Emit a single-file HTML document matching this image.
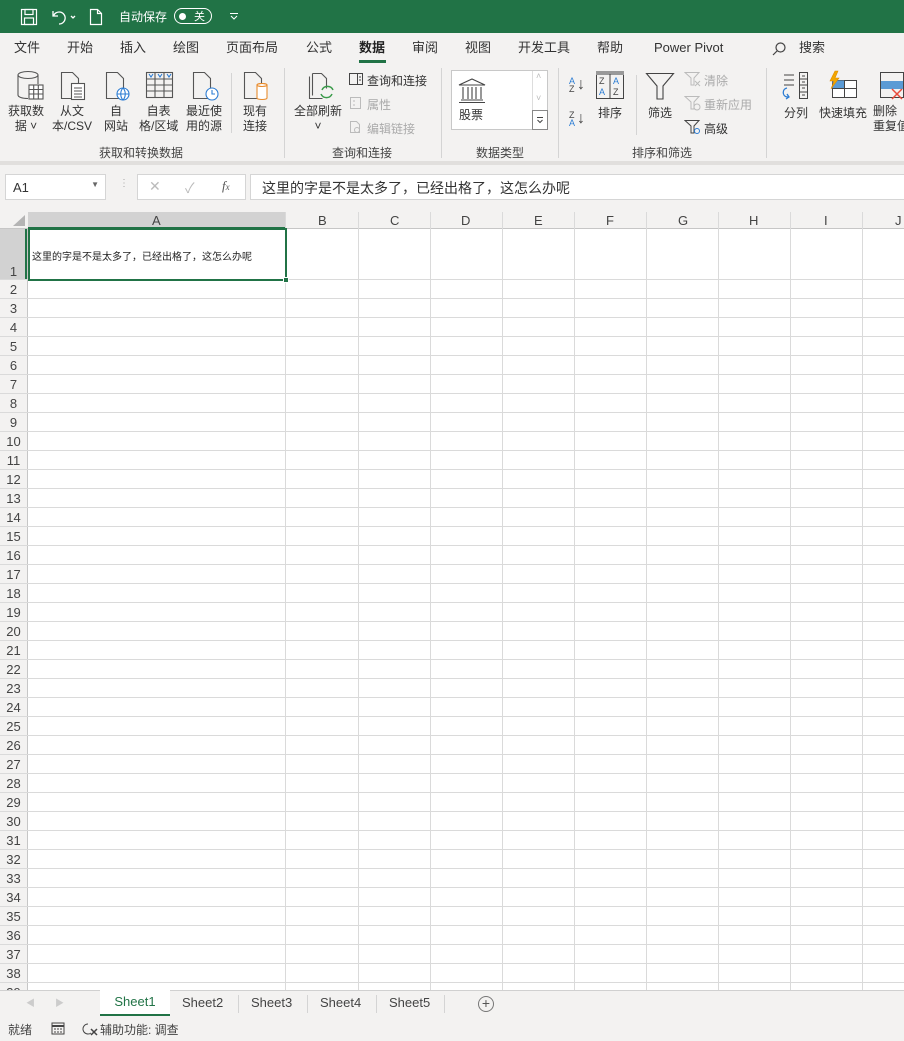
<!DOCTYPE html><html><head><meta charset="utf-8"><style>
*{margin:0;padding:0;box-sizing:border-box}
body{width:904px;height:1041px;overflow:hidden;background:#fff;font-family:"Liberation Sans","Noto Sans CJK SC",sans-serif;font-size:12px;color:#333;position:relative}
.a{position:absolute;white-space:nowrap}
.tb{background:#217346;left:0;top:0;width:904px;height:33px;color:#fff}
.tabs{top:33px;left:0;width:904px;height:30px;background:#f3f2f1;font-size:13px;color:#333}
.tabs span{line-height:16px}
.rib{top:63px;left:0;width:904px;height:98px;background:#f3f2f1}
.sep{background:#d4d4d4;width:1px}
.lbl{font-size:12px;color:#333;text-align:center;line-height:15px}
.grp{font-size:12px;color:#444}
.gray{color:#aaa}
</style></head><body>
<div class="a tb">
 <svg class="a" style="left:19px;top:7px" width="20" height="20" viewBox="0 0 20 20" fill="none" stroke="#fff" stroke-width="1.2"><rect x="2.5" y="2.5" width="15" height="15"/><rect x="6" y="2.5" width="8" height="5"/><rect x="5.5" y="11" width="9" height="6.5"/></svg>
 <svg class="a" style="left:50px;top:7px" width="28" height="20" viewBox="0 0 28 20" fill="none" stroke="#fff" stroke-width="1.3"><path d="M3 4v5h5"/><path d="M3.5 9A6 6 0 1 1 9 17"/><path d="M21 9l2 2 2-2"/></svg>
 <svg class="a" style="left:88px;top:7px" width="16" height="20" viewBox="0 0 16 20" fill="none" stroke="#fff" stroke-width="1.2"><path d="M2.5 2.5h7l4 4v11h-11z M9.5 2.5v4h4"/></svg>
 <div class="a" style="left:119px;top:8px;font-size:12px">自动保存</div>
 <div class="a" style="left:174px;top:8px;width:38px;height:16px;border:1px solid #fff;border-radius:8px"></div>
 <div class="a" style="left:179px;top:13px;width:7px;height:7px;background:#fff;border-radius:50%"></div>
 <div class="a" style="left:194px;top:8px;font-size:11px">关</div>
 <svg class="a" style="left:229px;top:12px" width="10" height="8" fill="none" stroke="#fff"><path d="M1 1.5h8M2 4l3 3 3-3"/></svg>
</div>
<div class="a tabs">
 <span class="a" style="left:14px;top:7px">文件</span><span class="a" style="left:67px;top:7px">开始</span><span class="a" style="left:120px;top:7px">插入</span><span class="a" style="left:173px;top:7px">绘图</span><span class="a" style="left:226px;top:7px">页面布局</span><span class="a" style="left:306px;top:7px">公式</span><span class="a" style="left:359px;top:7px;font-weight:bold;color:#222">数据</span><div class="a" style="left:359px;top:27px;width:27px;height:3px;background:#217346"></div><span class="a" style="left:412px;top:7px">审阅</span><span class="a" style="left:465px;top:7px">视图</span><span class="a" style="left:518px;top:7px">开发工具</span><span class="a" style="left:597px;top:7px">帮助</span><span class="a" style="left:654px;top:7px">Power Pivot</span>
 <svg class="a" style="left:771px;top:8px" width="16" height="16" viewBox="0 0 16 16" fill="none" stroke="#444" stroke-width="1.2"><circle cx="9.5" cy="6.5" r="4.5"/><path d="M6 10l-4 4"/></svg>
 <span class="a" style="left:799px;top:7px">搜索</span>
</div>
<div class="a rib">
 <svg class="a" style="left:16px;top:7px" width="30" height="34" viewBox="0 0 30 34" fill="none" stroke="#555" stroke-width="1.1"><ellipse cx="12" cy="5" rx="10" ry="3.5"/><path d="M2 5v20c0 2 4 3.5 10 3.5M22 5v9"/><rect x="13" y="15" width="14" height="14" fill="#fff"/><path d="M13 19.5h14M13 24h14M17.7 15v14M22.3 15v14"/></svg>
 <div class="a lbl" style="left:8px;top:41px">获取数<br>据 ˅</div>
 <svg class="a" style="left:59px;top:7px" width="30" height="34" viewBox="0 0 30 34" fill="none" stroke="#555" stroke-width="1.1"><path d="M2.5 2.5h11l6 6v20h-17z"/><rect x="12.5" y="13.5" width="13" height="16" fill="#fff"/><path d="M15 18h8M15 21h8M15 24h8M15 27h8"/></svg>
 <div class="a lbl" style="left:52px;top:41px">从文<br>本/CSV</div>
 <svg class="a" style="left:104px;top:7px" width="30" height="34" viewBox="0 0 30 34" fill="none" stroke="#555" stroke-width="1.1"><path d="M2.5 2.5h11l6 6v20h-17z"/><circle cx="19" cy="24" r="6" fill="#fff" stroke="#2b7cd3"/><path d="M13 24h12M19 18c-3 3-3 9 0 12c3-3 3-9 0-12" stroke="#2b7cd3"/></svg>
 <div class="a lbl" style="left:104px;top:41px">自<br>网站</div>
 <svg class="a" style="left:145px;top:7px" width="30" height="34" viewBox="0 0 30 34" fill="none" stroke="#555" stroke-width="1.1"><rect x="1.5" y="2.5" width="26" height="25"/><path d="M1.5 9h26M1.5 15h26M1.5 21h26M10 2.5v25M19 2.5v25"/><path d="M4 4l2 3 2-3M13 4l2 3 2-3M22 4l2 3 2-3" stroke="#2b7cd3"/></svg>
 <div class="a lbl" style="left:139px;top:41px">自表<br>格/区域</div>
 <svg class="a" style="left:191px;top:7px" width="30" height="34" viewBox="0 0 30 34" fill="none" stroke="#555" stroke-width="1.1"><path d="M2.5 2.5h11l6 6v20h-17z"/><circle cx="21" cy="24" r="6" fill="#fff" stroke="#2b7cd3"/><path d="M21 20v4h3" stroke="#2b7cd3"/></svg>
 <div class="a lbl" style="left:186px;top:41px">最近使<br>用的源</div>
 <div class="a sep" style="left:231px;top:10px;height:60px"></div>
 <svg class="a" style="left:242px;top:7px" width="30" height="34" viewBox="0 0 30 34" fill="none" stroke="#555" stroke-width="1.1"><path d="M2.5 2.5h11l6 6v20h-17z"/><path d="M15 15c0-2 10-2 10 0v13c0 2-10 2-10 0z" fill="#fff" stroke="#e88c2e"/><ellipse cx="20" cy="15" rx="5" ry="1.5" stroke="#e88c2e"/></svg>
 <div class="a lbl" style="left:243px;top:41px">现有<br>连接</div>
 <div class="a grp" style="left:99px;top:81px">获取和转换数据</div>
 <div class="a sep" style="left:284px;top:5px;height:90px"></div>
 <svg class="a" style="left:305px;top:7px" width="32" height="34" viewBox="0 0 32 34" fill="none" stroke="#555" stroke-width="1.1"><path d="M4.5 6.5v22h13M7.5 3.5h9l5 5v10M7.5 3.5v22"/><path d="M16 24a6 6 0 0 0 11 0M28 20a6 6 0 0 0-11 0" stroke="#3a9b4a" stroke-width="1.5"/></svg>
 <div class="a lbl" style="left:294px;top:41px">全部刷新<br>˅</div>
 <svg class="a" style="left:348px;top:9px" width="16" height="14" viewBox="0 0 16 14" fill="none" stroke="#444"><rect x="1.5" y="1.5" width="13" height="11"/><path d="M9.5 1.5v11M11 5h2M11 8h2"/></svg>
 <span class="a" style="left:367px;top:9px">查询和连接</span>
 <svg class="a" style="left:349px;top:33px" width="14" height="14" viewBox="0 0 14 14" fill="none" stroke="#bbb"><rect x="1.5" y="1.5" width="10" height="11"/><path d="M4 5h2M4 9h2"/></svg>
 <span class="a gray" style="left:367px;top:33px">属性</span>
 <svg class="a" style="left:349px;top:57px" width="14" height="14" viewBox="0 0 14 14" fill="none" stroke="#bbb"><path d="M1.5 1.5h6l3 3v8h-9z"/><circle cx="8" cy="10" r="2.5"/></svg>
 <span class="a gray" style="left:367px;top:57px">编辑链接</span>
 <div class="a grp" style="left:332px;top:81px">查询和连接</div>
 <div class="a sep" style="left:441px;top:5px;height:90px"></div>
 <div class="a" style="left:451px;top:7px;width:97px;height:60px;background:#fff;border:1px solid #c8c8c8"></div>
 <div class="a" style="left:532px;top:8px;width:15px;height:58px;border-left:1px solid #ddd"></div>
 <div class="a" style="left:532px;top:47px;width:16px;height:20px;border:1px solid #888"></div>
 <svg class="a" style="left:535px;top:52px" width="10" height="10" fill="none" stroke="#444"><path d="M2 2.5h6M2.5 5l2.5 2.5 2.5-2.5"/></svg>
 <div class="a" style="left:536px;top:8px;color:#bbb;font-size:9px">˄</div><div class="a" style="left:536px;top:30px;color:#bbb;font-size:9px">˅</div>
 <svg class="a" style="left:457px;top:14px" width="30" height="26" viewBox="0 0 30 26" fill="none" stroke="#444" stroke-width="1.1"><path d="M2 8L15 2l13 6zM2 8h26M4 23h22M2 25.5h26M6 10v12M11 10v12M15 10v12M19 10v12M24 10v12"/></svg>
 <span class="a" style="left:459px;top:43px">股票</span>
 <div class="a grp" style="left:476px;top:81px">数据类型</div>
 <div class="a sep" style="left:558px;top:5px;height:90px"></div>
 <div class="a" style="left:569px;top:14px;font-size:9px;line-height:8px;color:#2b7cd3">A<br><span style="color:#444">Z</span></div><div class="a" style="left:577px;top:13px;font-size:16px;color:#444">↓</div>
 <div class="a" style="left:569px;top:48px;font-size:9px;line-height:8px;color:#444">Z<br><span style="color:#2b7cd3">A</span></div><div class="a" style="left:577px;top:47px;font-size:16px;color:#444">↓</div>
 <svg class="a" style="left:596px;top:8px" width="28" height="28" viewBox="0 0 28 28" fill="none" stroke="#444"><rect x="0.5" y="2.5" width="27" height="25"/><rect x="0.5" y="0.5" width="27" height="3" fill="#999" stroke="#999"/><path d="M14 3v24"/><text x="3" y="13" font-size="9" fill="#444" stroke="none" font-family="Liberation Sans">Z</text><text x="3" y="24" font-size="9" fill="#2b7cd3" stroke="none" font-family="Liberation Sans">A</text><text x="17" y="13" font-size="9" fill="#2b7cd3" stroke="none" font-family="Liberation Sans">A</text><text x="17" y="24" font-size="9" fill="#444" stroke="none" font-family="Liberation Sans">Z</text></svg>
 <span class="a" style="left:598px;top:41px">排序</span>
 <div class="a sep" style="left:636px;top:12px;height:60px"></div>
 <svg class="a" style="left:645px;top:8px" width="30" height="30" viewBox="0 0 30 30" fill="none" stroke="#444" stroke-width="1.1"><path d="M1.5 2.5h27L18 15v13h-6V15z"/></svg>
 <span class="a" style="left:648px;top:41px">筛选</span>
 <svg class="a" style="left:684px;top:8px" width="18" height="16" viewBox="0 0 18 16" fill="none" stroke="#bbb"><path d="M1 1.5h14L10 7v7H7V7z M11 10l5 5M16 10l-5 5"/></svg><span class="a gray" style="left:704px;top:9px">清除</span>
 <svg class="a" style="left:684px;top:32px" width="18" height="16" viewBox="0 0 18 16" fill="none" stroke="#bbb"><path d="M1 1.5h14L10 7v7H7V7z"/><circle cx="13" cy="12" r="3"/></svg><span class="a gray" style="left:704px;top:33px">重新应用</span>
 <svg class="a" style="left:684px;top:56px" width="18" height="16" viewBox="0 0 18 16" fill="none" stroke="#444"><path d="M1 1.5h14L10 7v7H7V7z"/><circle cx="13" cy="12" r="2.5" stroke="#2b7cd3"/></svg><span class="a" style="left:704px;top:57px">高级</span>
 <div class="a grp" style="left:632px;top:81px">排序和筛选</div>
 <div class="a sep" style="left:766px;top:5px;height:90px"></div>
 <svg class="a" style="left:779px;top:8px" width="32" height="30" viewBox="0 0 32 30" fill="none" stroke="#444"><path d="M5 4h10M5 9h10M5 14h10"/><rect x="20.5" y="1.5" width="8" height="26"/><path d="M20.5 8h8M20.5 14h8M20.5 21h8M23 5h3M23 11h3M23 17h3M23 24h3"/><path d="M8 17c-5 1-5 8 0 9l2 0M8 23l2 3-3 2" stroke="#2b7cd3" stroke-width="1.3"/></svg>
 <span class="a" style="left:784px;top:41px">分列</span>
 <svg class="a" style="left:826px;top:7px" width="32" height="30" viewBox="0 0 32 30" fill="none" stroke="#444"><rect x="6.5" y="10.5" width="24" height="17" fill="#fff"/><rect x="6.5" y="10.5" width="12" height="8" fill="#5b9bd5" stroke="none"/><path d="M6.5 18.5h24M18.5 10.5v17"/><path d="M9 1l-5 10h4l-3 8 8-11H9l3-7z" fill="#f2a700" stroke="#e08a00" stroke-width=".6"/></svg>
 <span class="a" style="left:819px;top:41px">快速填充</span>
 <svg class="a" style="left:879px;top:8px" width="25" height="30" viewBox="0 0 25 30" fill="none" stroke="#444"><rect x="1.5" y="1.5" width="23" height="25"/><rect x="2" y="10" width="22" height="8" fill="#5b9bd5" stroke="none"/><path d="M13 18l10 10M23 18l-10 10" stroke="#e84a3a" stroke-width="1.5"/></svg>
 <div class="a lbl" style="left:873px;top:41px;text-align:left">删除<br>重复值</div>
</div>
<div class="a" style="left:0;top:161px;width:904px;height:4px;background:#e1dfdd"></div>
<div class="a" style="left:0;top:165px;width:904px;height:47px;background:#f3f2f1"></div>
<div class="a" style="left:5px;top:174px;width:101px;height:26px;background:#fff;border:1px solid #d5d5d5;font-size:13px;padding:5px 7px">A1<span style="position:absolute;right:6px;top:5px;font-size:8px;color:#666">▼</span></div>
<div class="a" style="left:119px;top:178px;color:#aaa;font-size:10px">⋮</div>
<div class="a" style="left:137px;top:174px;width:109px;height:26px;background:#fff;border:1px solid #d5d5d5"></div>
<div class="a" style="left:149px;top:178px;color:#bbb;font-size:14px">✕</div>
<div class="a" style="left:185px;top:178px;color:#bbb;font-size:14px">✓</div>
<div class="a" style="left:222px;top:178px;color:#555;font-style:italic;font-family:'Liberation Serif',serif;font-size:13px">f<span style="font-size:9px">x</span></div>
<div class="a" style="left:250px;top:174px;width:654px;height:26px;background:#fff;border:1px solid #d5d5d5;border-right:none;font-size:14px;padding:3px 11px;color:#333">这里的字是不是太多了，已经出格了，这怎么办呢</div>
<!-- grid -->
<div class="a" style="left:0;top:212px;width:904px;height:778px;background:#fff"></div>
<div class="a" style="left:0;top:212px;width:904px;height:17px;background:#f3f2f1;border-bottom:1px solid #c6c6c6"></div>
<div class="a" style="left:28px;top:212px;width:258px;height:17px;background:#d2d2d2;border-bottom:2px solid #217346"></div>
<svg class="a" style="left:12px;top:214px" width="14" height="13"><path d="M13 1V12H1z" fill="#b4b4b4"/></svg>
<div class="a" style="left:0;top:229px;width:28px;height:761px;background:#f3f2f1;border-right:1px solid #c6c6c6"></div>
<div class="a" style="left:0;top:229px;width:27px;height:51px;background:#d2d2d2;border-right:2px solid #217346"></div>
<div class="a" style="left:0;top:261px;width:904px;height:729px;background:repeating-linear-gradient(to bottom,transparent 0 18px,#dadada 18px 19px)"></div>
<div class="a" style="left:285px;top:212px;width:1px;height:778px;background:#dadada"></div>
<div class="a" style="left:358px;top:212px;width:1px;height:778px;background:#dadada"></div><div class="a" style="left:430px;top:212px;width:1px;height:778px;background:#dadada"></div><div class="a" style="left:502px;top:212px;width:1px;height:778px;background:#dadada"></div><div class="a" style="left:574px;top:212px;width:1px;height:778px;background:#dadada"></div><div class="a" style="left:646px;top:212px;width:1px;height:778px;background:#dadada"></div><div class="a" style="left:718px;top:212px;width:1px;height:778px;background:#dadada"></div><div class="a" style="left:790px;top:212px;width:1px;height:778px;background:#dadada"></div><div class="a" style="left:862px;top:212px;width:1px;height:778px;background:#dadada"></div>
<div class="a" style="left:28px;top:228px;width:259px;height:53px;border:2px solid #217346"></div>
<div class="a" style="left:283px;top:277px;width:6px;height:6px;background:#217346;border:1px solid #fff"></div>
<div class="a" style="left:32px;top:248px;font-size:10px;color:#222">这里的字是不是太多了，已经出格了，这怎么办呢</div>
<div class="a" style="left:0;top:212px;width:904px;font-size:13px;color:#444;line-height:18px">
<span class="a" style="left:152px">A</span><span class="a" style="left:318px">B</span><span class="a" style="left:390px">C</span><span class="a" style="left:461px">D</span><span class="a" style="left:534px">E</span><span class="a" style="left:606px">F</span><span class="a" style="left:678px">G</span><span class="a" style="left:749px">H</span><span class="a" style="left:824px">I</span><span class="a" style="left:895px">J</span>
</div>
<div class="a" style="left:0;top:229px;width:27px;font-size:13px;color:#444;text-align:center">
<div style="height:51px;line-height:13px;padding-top:36px">1</div>
<div style="line-height:19px">2<br>3<br>4<br>5<br>6<br>7<br>8<br>9<br>10<br>11<br>12<br>13<br>14<br>15<br>16<br>17<br>18<br>19<br>20<br>21<br>22<br>23<br>24<br>25<br>26<br>27<br>28<br>29<br>30<br>31<br>32<br>33<br>34<br>35<br>36<br>37<br>38<br>39</div>
</div>
<!-- sheet tabs -->
<div class="a" style="left:0;top:990px;width:904px;height:26px;background:#f3f2f1;border-top:1px solid #d0d0d0;font-size:13px;color:#444">
 <span class="a" style="left:26px;top:5px;color:#ccc;font-size:9px">◀</span><span class="a" style="left:55px;top:5px;color:#ccc;font-size:9px">▶</span>
 <div class="a" style="left:100px;top:-1px;width:70px;height:26px;background:#fff;border-bottom:2px solid #217346;color:#217346;text-align:center;line-height:24px">Sheet1</div>
 <span class="a" style="left:182px;top:4px">Sheet2</span><div class="a sep" style="left:238px;top:4px;height:18px"></div>
 <span class="a" style="left:251px;top:4px">Sheet3</span><div class="a sep" style="left:307px;top:4px;height:18px"></div>
 <span class="a" style="left:320px;top:4px">Sheet4</span><div class="a sep" style="left:376px;top:4px;height:18px"></div>
 <span class="a" style="left:389px;top:4px">Sheet5</span><div class="a sep" style="left:444px;top:4px;height:18px"></div>
 <div class="a" style="left:478px;top:5px;width:16px;height:16px;border:1px solid #777;border-radius:50%;text-align:center;line-height:13px;font-size:14px;color:#555">+</div>
</div>
<div class="a" style="left:0;top:1016px;width:904px;height:25px;background:#f3f2f1;font-size:12px;color:#444">
 <span class="a" style="left:8px;top:5px">就绪</span>
 <svg class="a" style="left:51px;top:6px" width="14" height="13"><rect x="1" y="1" width="12" height="11" fill="none" stroke="#444"/><path d="M1 4h12" stroke="#444" stroke-width="2"/><path d="M3 7h2M6 7h2M9 7h2M3 10h2M6 10h2M9 10h2" stroke="#444"/></svg>
 <svg class="a" style="left:81px;top:5px" width="18" height="16" fill="none" stroke="#444"><path d="M7 3a5 5 0 1 0 3 9"/><path d="M10 8l6 6M16 8l-6 6" stroke-width="1.5"/></svg>
 <span class="a" style="left:100px;top:5px">辅助功能: 调查</span>
</div>
</body></html>
